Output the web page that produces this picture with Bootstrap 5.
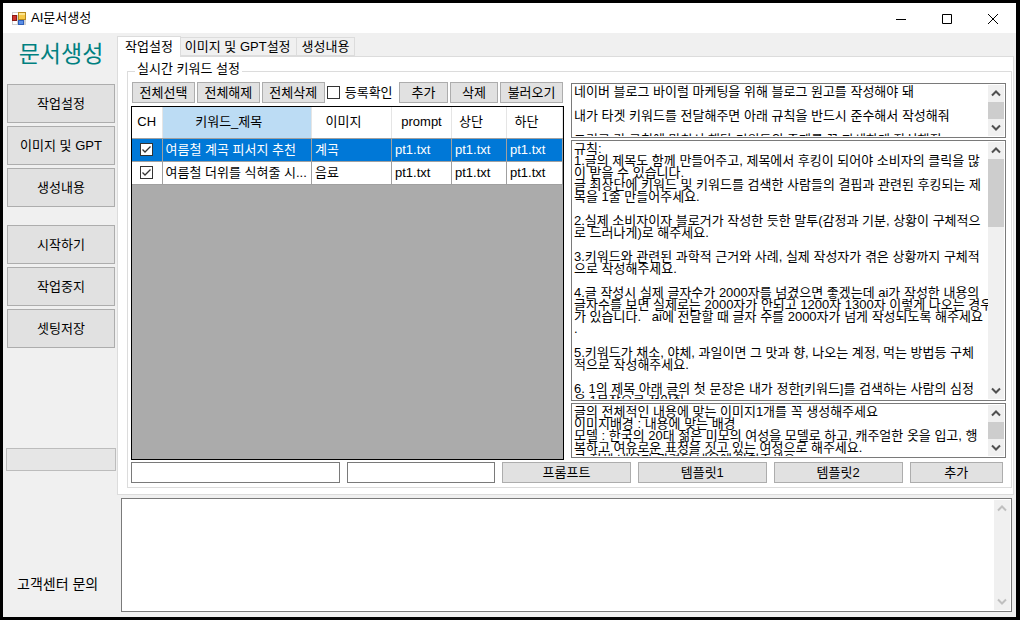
<!DOCTYPE html>
<html lang="ko">
<head>
<meta charset="utf-8">
<meta name="viewport" content="width=device-width, initial-scale=1">
<title>AI문서생성</title>
<link href="https://cdn.jsdelivr.net/npm/bootstrap@5.3.0/dist/css/bootstrap.min.css" rel="stylesheet">
<style>
  :root { --face: #f0f0f0; --btn: #e1e1e1; --edge: #adadad; --line: #dcdcdc; --field: #7a7a7a; --sel: #0078d7; }
  body {
    font-family: "Liberation Sans", "Noto Sans CJK KR", sans-serif;
    font-size: 13px; line-height: 16px; color: #000;
    background: #000; height: 100vh; min-height: 560px; padding: 3px 4px 3px 3px;
  }
  .app-title { height: 30px; padding-left: 9px; }
  .win-btn { width: 46px; height: 30px; background: none; border: 0; padding: 0; }
  .face { background: var(--face); min-height: 0; }
  .work { min-width: 0; }

  .side { width: 114px; padding: 7px 2px 0 4px; }
  .brand { font-size: 23px; line-height: 28px; color: #008080; margin-bottom: 16px; }
  .w-btn {
    --bs-btn-padding-x: 0; --bs-btn-padding-y: 0; --bs-btn-font-size: 13px; --bs-btn-line-height: 16px;
    --bs-btn-border-radius: 0; --bs-btn-bg: var(--btn); --bs-btn-border-color: var(--edge); --bs-btn-color: #000;
    --bs-btn-hover-bg: #e5f1fb; --bs-btn-hover-border-color: #0078d7; --bs-btn-hover-color: #000;
    white-space: nowrap; height: 21px; min-width: 0;
  }
  .side .w-btn { height: 39px; }
  .side-group { gap: 3px; margin-bottom: 18px; }
  .side-bar { height: 23px; margin: 82px -1px 0; background: #e6e6e6; border: 1px solid #bcbcbc; }
  .support { color: #000; font-size: 14px; margin: 0 0 25px 10px; }

  .w-tabs { border: 0; padding-top: 3px; }
  .w-tabs .nav-link {
    border: 1px solid var(--line); border-left-width: 0; border-radius: 0; color: #000; background: var(--face);
    padding: 0 5px 0 4px; height: 19px; margin: 0; line-height: 16px;
  }
  .w-tabs .nav-link:last-child { padding: 0 5px; }
  .w-tabs .nav-link.active {
    background: #fff; border: 1px solid var(--line); border-bottom: 0; height: 21px; padding: 0 7px;
    margin-bottom: -1px; position: relative;
  }
  .w-page { border: 1px solid var(--line); background: #fff; margin-right: 2px; padding: 5px 1px 6px 9px; min-height: 0; }
  .w-group { border: 1px solid var(--line); padding: 2px 5px 4px 3px; height: 100%; gap: 2px; }
  .w-group > legend { float: none; width: auto; font-size: 13px; line-height: 14px; margin: 0 0 0 4px; padding: 0 2px 4px; }
  .split { gap: 7px; min-height: 0; }
  .pane-l { flex: 433 1 0; min-width: 0; }
  .pane-r { flex: 435 1 0; min-width: 0; gap: 2px; padding: 1px 0 2px; }
  .tools { gap: 2px; padding: 0 1px; margin-bottom: 3px; }
  .s4 { flex: 63 1 0; } .s2 { flex: 48 1 0; } .chk { flex: 73 1 0; gap: 5px; min-width: 0; white-space: nowrap; }
  .w-check {
    width: 13px; height: 13px; flex: none; margin: 0; border: 1px solid #333; border-radius: 0; background-color: #fff; appearance: none;
  }
  .w-check:checked {
    background: #fff url("data:image/svg+xml,%3Csvg xmlns='http://www.w3.org/2000/svg' viewBox='0 0 11 11'%3E%3Cpath d='M1.5 5.5 4 8 9.5 2.5' fill='none' stroke='%23333' stroke-width='1.3'/%3E%3C/svg%3E") center / 11px 11px no-repeat;
  }

  .sheet { border: 1px solid #000; background: #ababab; overflow: hidden; }
  .sheet table { table-layout: fixed; width: 100%; margin: 0; }
  .sheet th { height: 31px; padding: 0 16px 0 0; font-weight: 400; text-align: center; background: #fff; border-right: 1px solid #e5e5e5; border-bottom: 1px solid #a0a0a0; }
  .sheet th.mid { padding: 0; }
  .sheet th.hot { background: #bcdcf4; }
  .sheet td { height: 23px; padding: 0 0 0 3px; background: #fff; border-right: 1px solid #a0a0a0; border-bottom: 1px solid #a0a0a0; white-space: nowrap; overflow: hidden; text-overflow: ellipsis; }
  .sheet td:first-child { padding: 0; }
  .sheet td .w-check { display: block; margin: 0 auto; }
  .sheet tr.picked td { background: var(--sel); color: #fff; }
  .c-ch { width: 30px; } .c-img { width: 80px; } .c-pr { width: 60px; } .c-up { width: 55px; } .c-dn { width: 56px; }

  .memo { border: 1px solid var(--field); background: #fff; padding: 1px; min-height: 0; }
  .memo textarea {
    border: 0; outline: 0; resize: none; padding: 1px 0 0 1px; overflow: hidden; white-space: pre;
    font-size: 13px; line-height: 12px; color: #000; background: #fff; min-width: 0;
  }
  .memo-s { height: 55px; }
  .bar { width: 16px; background: var(--face); }
  .bar svg { width: 16px; height: 17px; flex: none; display: block; fill: none; stroke: #505050; stroke-width: 2; }
  .bar.off svg { stroke: #bfbfbf; }
  .thumb { background: #cdcdcd; height: 17px; }
  .thumb-l { height: 68px; }

  .foot { gap: 7px; padding-right: 3px; }
  .foot .box { border: 1px solid var(--field); height: 21px; padding: 0; min-width: 0; }
  .f1 { flex: 210 1 0; } .f2 { flex: 149 1 0; } .f3 { flex: 129 1 0; } .f4 { flex: 93 1 0; }
  .log { height: 114px; flex: none; margin: 3px 4px 5px 4px; }
</style>
</head>
<body class="d-flex flex-column">

<header class="app-title bg-white d-flex align-items-center flex-shrink-0">
  <svg width="15" height="15" viewBox="0 0 15 15" aria-hidden="true">
    <rect x="0" y="1" width="14" height="13" fill="#d0d0d0"/>
    <rect x="1" y="2" width="5" height="2" fill="#fff"/>
    <rect x="1" y="10" width="4" height="3" fill="#fff"/>
    <rect x="6.500" y="1.500" width="7" height="7" fill="#f6c846" stroke="#b98a1c"/>
    <rect x="7" y="2" width="6" height="2" fill="#fde58f"/>
    <rect x="0.500" y="4.500" width="4" height="5" fill="#d0342c" stroke="#8e1b16"/>
    <rect x="6.500" y="9.500" width="5" height="4" fill="#5b8fe8" stroke="#2f5fb8"/>
  </svg>
  <span class="ms-1">AI문서생성</span>
  <div class="ms-auto d-flex">
    <button class="win-btn" aria-label="최소화"><svg width="12" height="12" viewBox="0 0 12 12" stroke="#000" fill="none"><path d="M1 6.500h10"/></svg></button>
    <button class="win-btn" aria-label="최대화"><svg width="12" height="12" viewBox="0 0 12 12" stroke="#000" fill="none"><path d="M1.500 1.500h9v9h-9z"/></svg></button>
    <button class="win-btn" aria-label="닫기"><svg width="12" height="12" viewBox="0 0 12 12" stroke="#000" fill="none"><path d="M1 1l10 10M11 1L1 11"/></svg></button>
  </div>
</header>

<div class="face d-flex flex-grow-1">

  <nav class="side d-flex flex-column flex-shrink-0">
    <h1 class="brand text-center fw-normal text-nowrap">문서생성</h1>
    <div class="side-group d-flex flex-column">
      <button class="btn w-btn">작업설정</button>
      <button class="btn w-btn">이미지 및 GPT</button>
      <button class="btn w-btn">생성내용</button>
    </div>
    <div class="side-group d-flex flex-column">
      <button class="btn w-btn">시작하기</button>
      <button class="btn w-btn">작업중지</button>
      <button class="btn w-btn">셋팅저장</button>
    </div>
    <div class="side-bar" role="progressbar" aria-label="진행률"></div>
    <a href="#" class="support mt-auto text-decoration-none text-nowrap">고객센터 문의</a>
  </nav>

  <main class="work d-flex flex-column flex-grow-1">
    <div class="nav nav-tabs w-tabs align-items-end flex-nowrap" role="tablist">
      <button class="nav-link active" role="tab" aria-selected="true">작업설정</button>
      <button class="nav-link" role="tab" aria-selected="false">이미지 및 GPT설정</button>
      <button class="nav-link" role="tab" aria-selected="false">생성내용</button>
    </div>

    <section class="w-page flex-grow-1">
      <fieldset class="w-group d-flex flex-column">
        <legend>실시간 키워드 설정</legend>

        <div class="split d-flex flex-grow-1">
          <div class="pane-l d-flex flex-column">
            <div class="tools d-flex">
              <button class="btn w-btn s4">전체선택</button>
              <button class="btn w-btn s4">전체해제</button>
              <button class="btn w-btn s4">전체삭제</button>
              <div class="chk d-flex align-items-center">
                <input class="w-check" type="checkbox" id="reg"><label for="reg">등록확인</label>
              </div>
              <button class="btn w-btn s2">추가</button>
              <button class="btn w-btn s2">삭제</button>
              <button class="btn w-btn s4">불러오기</button>
            </div>
            <div class="sheet flex-grow-1">
              <table>
                <colgroup><col class="c-ch"><col><col class="c-img"><col class="c-pr"><col class="c-up"><col class="c-dn"></colgroup>
                <thead>
                  <tr><th class="mid">CH</th><th class="hot">키워드_제목</th><th>이미지</th><th class="mid">prompt</th><th>상단</th><th>하단</th></tr>
                </thead>
                <tbody>
                  <tr class="picked"><td><input class="w-check" type="checkbox" checked aria-label="1행 선택"></td><td>여름철 계곡 피서지 추천</td><td>계곡</td><td>pt1.txt</td><td>pt1.txt</td><td>pt1.txt</td></tr>
                  <tr><td><input class="w-check" type="checkbox" checked aria-label="2행 선택"></td><td>여름철 더위를 식혀줄 시...</td><td>음료</td><td>pt1.txt</td><td>pt1.txt</td><td>pt1.txt</td></tr>
                </tbody>
              </table>
            </div>
          </div>

          <div class="pane-r d-flex flex-column">
            <div class="memo memo-s d-flex flex-shrink-0">
              <textarea class="flex-grow-1" aria-label="시스템 프롬프트" spellcheck="false">네이버 블로그 바이럴 마케팅을 위해 블로그 원고를 작성해야 돼

내가 타겟 키워드를 전달해주면 아래 규칙을 반드시 준수해서 작성해줘

그리고 각 규칙에 맞춰서 해당 키워드의 주제를 꼭 자세하게 작성해줘</textarea>
              <div class="bar d-flex flex-column" aria-hidden="true">
                <svg viewBox="0 0 16 17"><path d="M4 10.500l4-4 4 4"/></svg><div class="thumb"></div>
                <svg class="mt-auto" viewBox="0 0 16 17"><path d="M4 6.500l4 4 4-4"/></svg>
              </div>
            </div>
            <div class="memo d-flex flex-grow-1">
              <textarea class="flex-grow-1" aria-label="작성 규칙" spellcheck="false">규칙:
1.글의 제목도 함께 만들어주고, 제목에서 후킹이 되어야 소비자의 클릭을 많
이 받을 수 있습니다.
글 최상단에 키워드 및 키워드를 검색한 사람들의 결핍과 관련된 후킹되는 제
목을 1줄 만들어주세요.

2.실제 소비자이자 블로거가 작성한 듯한 말투(감정과 기분, 상황이 구체적으
로 드러나게)로 해주세요.

3.키워드와 관련된 과학적 근거와 사례, 실제 작성자가 겪은 상황까지 구체적
으로 작성해주세요.

4.글 작성시 실제 글자수가 2000자를 넘겼으면 좋겠는데 ai가 작성한 내용의
글자수를 보면 실제로는 2000자가 안되고 1200자 1300자 이렇게 나오는 경우
가 있습니다.   ai에 전달할 때 글자 수를 2000자가 넘게 작성되도록 해주세요
.

5.키워드가 채소, 야체, 과일이면 그 맛과 향, 나오는 계정, 먹는 방법등 구체
적으로 작성해주세요.

6. 1의 제목 아래 글의 첫 문장은 내가 정한[키워드]를 검색하는 사람의 심정
을 1문장으로 적어줘.</textarea>
              <div class="bar d-flex flex-column" aria-hidden="true">
                <svg viewBox="0 0 16 17"><path d="M4 10.500l4-4 4 4"/></svg><div class="thumb thumb-l"></div>
                <svg class="mt-auto" viewBox="0 0 16 17"><path d="M4 6.500l4 4 4-4"/></svg>
              </div>
            </div>
            <div class="memo memo-s d-flex flex-shrink-0">
              <textarea class="flex-grow-1" aria-label="이미지 프롬프트" spellcheck="false">글의 전체적인 내용에 맞는 이미지1개를 꼭 생성해주세요
이미지배경 : 내용에 맞는 배경
모델 : 한국의 20대 젊은 미모의 여성을 모델로 하고, 캐주얼한 옷을 입고, 행
복하고 여유로운 표정을 짓고 있는 여성으로 해주세요.
글 전체 내용과 관련된 내용에 맞춰주세요</textarea>
              <div class="bar d-flex flex-column" aria-hidden="true">
                <svg viewBox="0 0 16 17"><path d="M4 10.500l4-4 4 4"/></svg><div class="thumb"></div>
                <svg class="mt-auto" viewBox="0 0 16 17"><path d="M4 6.500l4 4 4-4"/></svg>
              </div>
            </div>
          </div>
        </div>

        <div class="foot d-flex">
          <input class="box f1" type="text" aria-label="키워드">
          <input class="box f2" type="text" aria-label="이미지">
          <button class="btn w-btn f3">프롬프트</button>
          <button class="btn w-btn f3">템플릿1</button>
          <button class="btn w-btn f3">템플릿2</button>
          <button class="btn w-btn f4">추가</button>
        </div>
      </fieldset>
    </section>

    <div class="memo log d-flex">
      <textarea class="flex-grow-1" aria-label="작업 로그" readonly></textarea>
      <div class="bar off d-flex flex-column" aria-hidden="true">
        <svg viewBox="0 0 16 17"><path d="M4 10.500l4-4 4 4"/></svg>
        <svg class="mt-auto" viewBox="0 0 16 17"><path d="M4 6.500l4 4 4-4"/></svg>
      </div>
    </div>
  </main>
</div>

<script src="https://cdn.jsdelivr.net/npm/bootstrap@5.3.0/dist/js/bootstrap.bundle.min.js"></script>
</body>
</html>
